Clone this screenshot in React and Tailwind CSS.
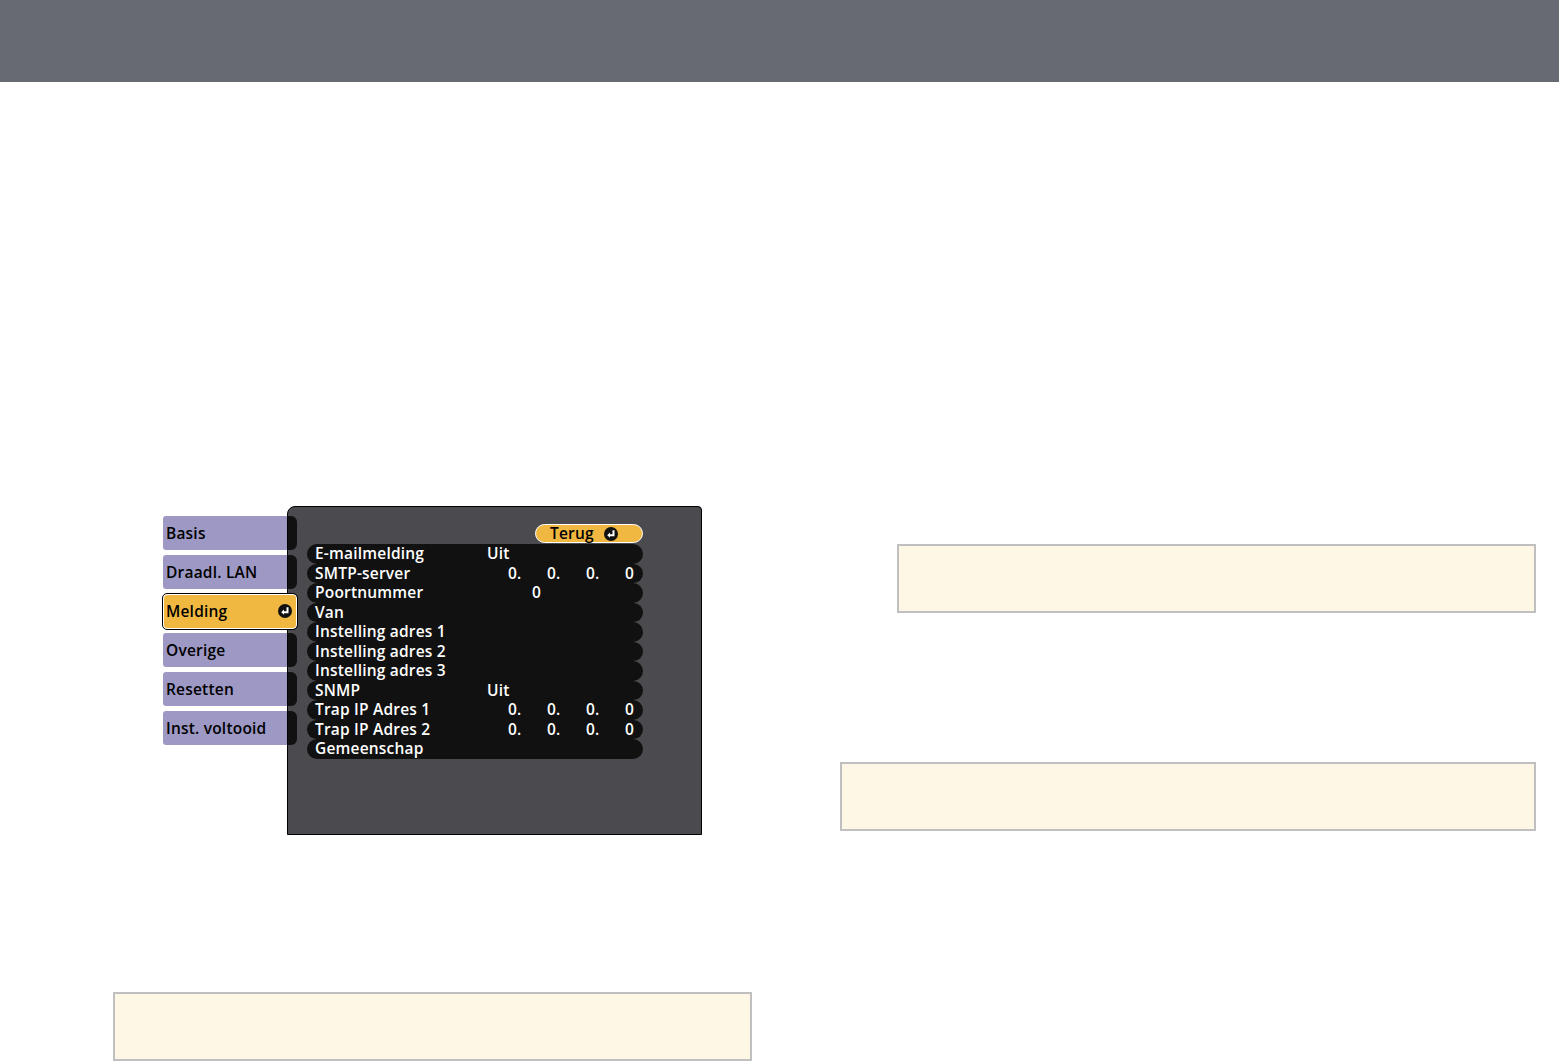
import React from "react";

function EnterIcon({ size = 14 }) {
  return (
    <svg width={size} height={size} viewBox="0 0 14 14">
      <circle cx="7" cy="7" r="7" fill="#111" />
      <path d="M9.5 3.2 V8.2 H5" stroke="#fff" strokeWidth="2" fill="none" />
      <path d="M3.2 8.2 L6 5.6 V10.8 Z" fill="#fff" />
    </svg>
  );
}

const tabs = ["Basis", "Draadl. LAN", "Melding", "Overige", "Resetten", "Inst. voltooid"];

function Row({ label, kind }) {
  return (
    <div className="h-[19.5px] w-[336px] rounded-full bg-[#111111] flex items-center pl-[8px] text-white leading-none">
      {kind === "uit" && (
        <>
          <span className="w-[172px] shrink-0">{label}</span>
          <span>Uit</span>
        </>
      )}
      {kind === "ip" && (
        <>
          <span className="w-[193px] shrink-0">{label}</span>
          <span className="w-[39px] shrink-0">0.</span>
          <span className="w-[39px] shrink-0">0.</span>
          <span className="w-[39px] shrink-0">0.</span>
          <span>0</span>
        </>
      )}
      {kind === "port" && (
        <>
          <span className="w-[217px] shrink-0">{label}</span>
          <span>0</span>
        </>
      )}
      {!kind && <span>{label}</span>}
    </div>
  );
}

function Menu() {
  return (
    <div className="flex ml-[50px] text-[15.5px] font-semibold tracking-[0.2px]" style={{ fontFamily: '"Open Sans", sans-serif' }}>
      <div className="w-[124px] pt-[10px] flex flex-col gap-[5px] relative z-10">
        {tabs.map((t) =>
          t === "Melding" ? (
            <div
              key={t}
              className="h-[35px] w-[134px] -my-[0.5px] rounded-[4px] bg-[#f1b841] border border-white outline outline-1 outline-black flex items-center justify-between pl-[2px] pr-[4px] text-black"
            >
              <span className="pt-[1px]">{t}</span>
              <EnterIcon />
            </div>
          ) : (
            <div key={t} className="h-[34px] w-[124px] rounded-l-[3px] bg-[#9d98c4] flex items-center pl-[3px] pt-[1px] text-black">
              {t}
            </div>
          )
        )}
      </div>
      <div className="w-[415px] h-[329px] bg-[#4a4a4f] border border-black rounded-tl-[8px] rounded-tr-[4px] relative">
        <div className="absolute left-0 top-[9px] flex flex-col gap-[5px]">
          {tabs.map((t) => (
            <div key={t} className="h-[34px] w-[9px] bg-[#111] rounded-r-[6px]" />
          ))}
        </div>
        <div className="pt-[17px] pl-[19px] flex flex-col">
          <div className="w-[336px] flex justify-end">
            <div className="h-[19px] w-[108px] rounded-full bg-[#f1b841] border border-white flex items-center pl-[14px] gap-[10px] text-black">
              <span>Terug</span>
              <EnterIcon />
            </div>
          </div>
          <div className="flex flex-col mt-[1px]">
            <Row label="E-mailmelding" kind="uit" />
            <Row label="SMTP-server" kind="ip" />
            <Row label="Poortnummer" kind="port" />
            <Row label="Van" />
            <Row label="Instelling adres 1" />
            <Row label="Instelling adres 2" />
            <Row label="Instelling adres 3" />
            <Row label="SNMP" kind="uit" />
            <Row label="Trap IP Adres 1" kind="ip" />
            <Row label="Trap IP Adres 2" kind="ip" />
            <Row label="Gemeenschap" />
          </div>
        </div>
      </div>
    </div>
  );
}

function Note({ className }) {
  return <div className={"h-[69px] bg-[#fef7e6] border-2 border-[#c0c0c0] " + className} />;
}

export default function App() {
  return (
    <div className="w-[1559px] h-[1061px] overflow-hidden bg-white">
      <div className="h-[82px] bg-[#686a73]" />
      <div className="flex">
        <div className="ml-[113px] w-[639px] pt-[424px] flex flex-col">
          <Menu />
          <Note className="mt-[157px] w-[639px]" />
        </div>
        <div className="ml-[88px] w-[696px] pt-[462px] flex flex-col">
          <Note className="ml-[57px] w-[639px]" />
          <Note className="mt-[149px] w-[696px]" />
        </div>
      </div>
    </div>
  );
}
